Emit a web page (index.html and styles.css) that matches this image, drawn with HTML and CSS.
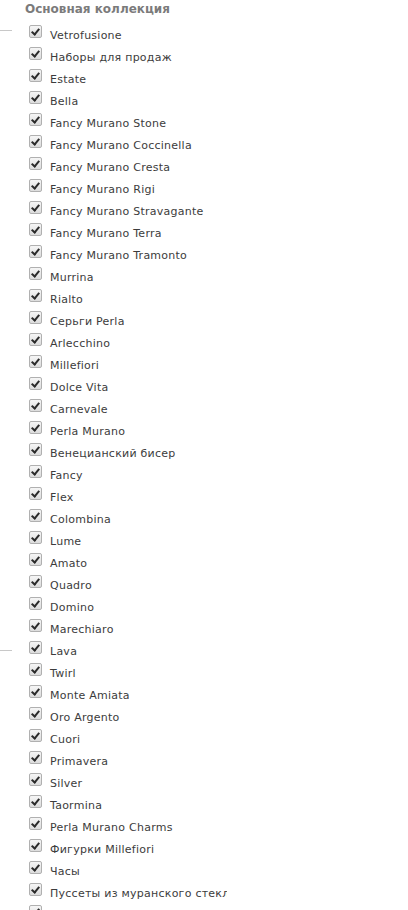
FILE: index.html
```html
<!DOCTYPE html>
<html>
<head>
<meta charset="utf-8">
<link rel="stylesheet" href="styles.css">
</head>
<body>
<div class="panel">
  <span class="rule rule-top"></span>
  <span class="rule rule-mid"></span>
  <h3 class="title">Основная коллекция</h3>
  <ul class="list">
    <li class="item"><span class="cb"></span><span class="lbl">Vetrofusione</span></li>
    <li class="item"><span class="cb"></span><span class="lbl">Наборы для продаж</span></li>
    <li class="item"><span class="cb"></span><span class="lbl">Estate</span></li>
    <li class="item"><span class="cb"></span><span class="lbl">Bella</span></li>
    <li class="item"><span class="cb"></span><span class="lbl">Fancy Murano Stone</span></li>
    <li class="item"><span class="cb"></span><span class="lbl">Fancy Murano Coccinella</span></li>
    <li class="item"><span class="cb"></span><span class="lbl">Fancy Murano Cresta</span></li>
    <li class="item"><span class="cb"></span><span class="lbl">Fancy Murano Rigi</span></li>
    <li class="item"><span class="cb"></span><span class="lbl">Fancy Murano Stravagante</span></li>
    <li class="item"><span class="cb"></span><span class="lbl">Fancy Murano Terra</span></li>
    <li class="item"><span class="cb"></span><span class="lbl">Fancy Murano Tramonto</span></li>
    <li class="item"><span class="cb"></span><span class="lbl">Murrina</span></li>
    <li class="item"><span class="cb"></span><span class="lbl">Rialto</span></li>
    <li class="item"><span class="cb"></span><span class="lbl">Серьги Perla</span></li>
    <li class="item"><span class="cb"></span><span class="lbl">Arlecchino</span></li>
    <li class="item"><span class="cb"></span><span class="lbl">Millefiori</span></li>
    <li class="item"><span class="cb"></span><span class="lbl">Dolce Vita</span></li>
    <li class="item"><span class="cb"></span><span class="lbl">Carnevale</span></li>
    <li class="item"><span class="cb"></span><span class="lbl">Perla Murano</span></li>
    <li class="item"><span class="cb"></span><span class="lbl">Венецианский бисер</span></li>
    <li class="item"><span class="cb"></span><span class="lbl">Fancy</span></li>
    <li class="item"><span class="cb"></span><span class="lbl">Flex</span></li>
    <li class="item"><span class="cb"></span><span class="lbl">Colombina</span></li>
    <li class="item"><span class="cb"></span><span class="lbl">Lume</span></li>
    <li class="item"><span class="cb"></span><span class="lbl">Amato</span></li>
    <li class="item"><span class="cb"></span><span class="lbl">Quadro</span></li>
    <li class="item"><span class="cb"></span><span class="lbl">Domino</span></li>
    <li class="item"><span class="cb"></span><span class="lbl">Marechiaro</span></li>
    <li class="item"><span class="cb"></span><span class="lbl">Lava</span></li>
    <li class="item"><span class="cb"></span><span class="lbl">Twirl</span></li>
    <li class="item"><span class="cb"></span><span class="lbl">Monte Amiata</span></li>
    <li class="item"><span class="cb"></span><span class="lbl">Oro Argento</span></li>
    <li class="item"><span class="cb"></span><span class="lbl">Cuori</span></li>
    <li class="item"><span class="cb"></span><span class="lbl">Primavera</span></li>
    <li class="item"><span class="cb"></span><span class="lbl">Silver</span></li>
    <li class="item"><span class="cb"></span><span class="lbl">Taormina</span></li>
    <li class="item"><span class="cb"></span><span class="lbl">Perla Murano Charms</span></li>
    <li class="item"><span class="cb"></span><span class="lbl">Фигурки Millefiori</span></li>
    <li class="item"><span class="cb"></span><span class="lbl">Часы</span></li>
    <li class="item"><span class="cb"></span><span class="lbl">Пуссеты из муранского стекла</span></li>
    <li class="item"><span class="cb"></span><span class="lbl">Броши</span></li>
  </ul>
</div>
</body>
</html>
```
FILE: styles.css
```css
html, body {
  margin: 0;
  padding: 0;
  background: #fff;
  height: 910px;
  overflow: hidden;
}
.panel {
  position: relative;
  width: 227px;
  overflow: hidden;
  font-family: "DejaVu Sans", Verdana, sans-serif;
}
.rule {
  position: absolute;
  left: 0;
  width: 12px;
  height: 1px;
  background: #c8c8c8;
}
.rule-top { top: 30px; }
.rule-mid { top: 650px; }
.title {
  margin: 0;
  padding: 1px 0 0 25px;
  height: 18px;
  font-size: 12px;
  line-height: 16px;
  font-weight: bold;
  color: #7b7b7b;
}
.list {
  list-style: none;
  margin: 0;
  padding: 4px 0 0 29px;
}
.item {
  display: flex;
  align-items: center;
  height: 22px;
  white-space: nowrap;
}
.cb {
  flex: none;
  box-sizing: border-box;
  width: 13px;
  height: 13px;
  border: 1px solid #b0b0b0;
  border-radius: 2px;
  background: linear-gradient(#f6f6f6, #dcdcdc);
  position: relative;
  margin-top: -6px;
}
.cb::after {
  content: "";
  position: absolute;
  left: 3px;
  top: 1px;
  width: 3px;
  height: 6px;
  border: solid #2b2b2b;
  border-width: 0 2px 2px 0;
  transform: rotate(40deg);
}
.lbl {
  margin-left: 8px;
  font-size: 11px;
  letter-spacing: 0.25px;
  color: #3c3c3c;
  margin-top: 1px;
  position: relative;
  top: 1px;
}
```
